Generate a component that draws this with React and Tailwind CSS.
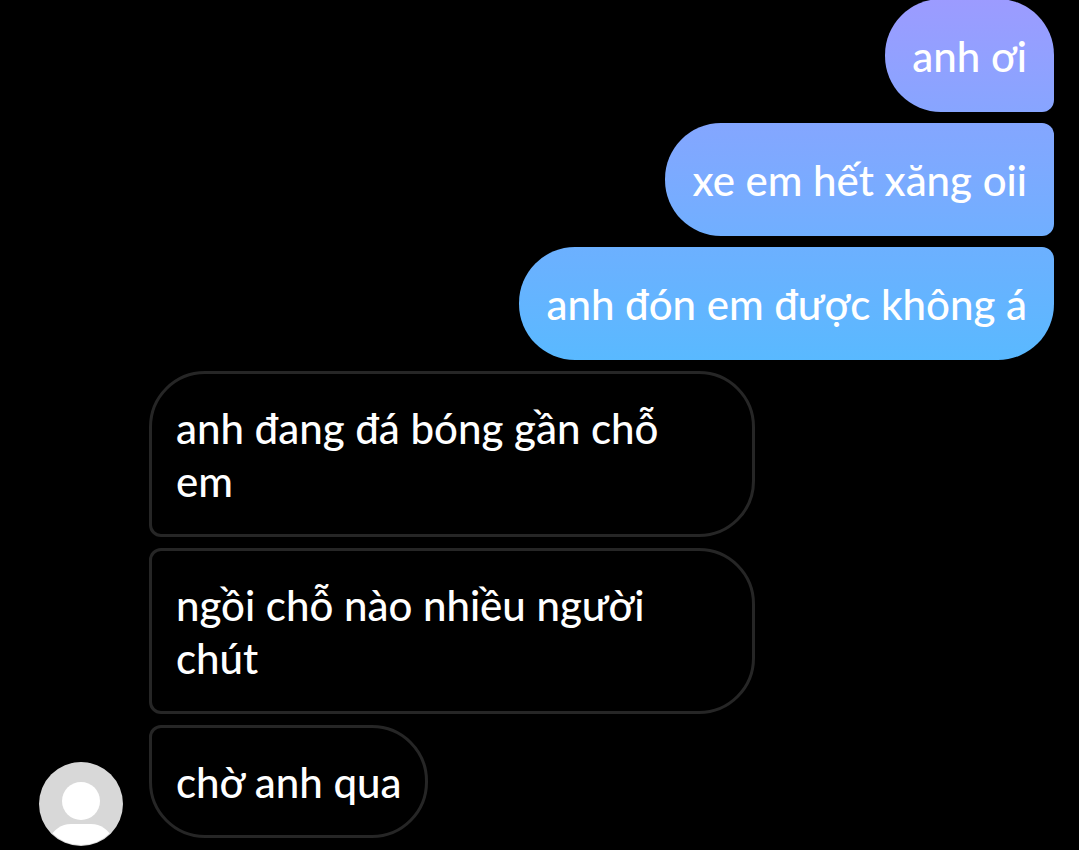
const sent = [
  {
    text: "anh ơi",
    className: "rounded-tr-[56px] rounded-br-xl from-[#9c9bff] to-[#87a5ff]",
  },
  {
    text: "xe em hết xăng oii",
    className: "rounded-r-xl from-[#84a6ff] to-[#70afff]",
  },
  {
    text: "anh đón em được không á",
    className: "rounded-tr-xl rounded-br-[56px] from-[#6cb0ff] to-[#59b9ff]",
  },
];

const received = [
  {
    text: "anh đang đá bóng gần chỗ\nem",
    className: "w-full rounded-tl-[56px] rounded-bl-xl",
  },
  { text: "ngồi chỗ nào nhiều người\nchút", className: "w-full rounded-l-xl" },
  { text: "chờ anh qua", className: "rounded-tl-xl rounded-bl-[56px]" },
];

function Avatar() {
  return (
    <svg viewBox="0 0 84 84" className="-mb-2 size-[84px] shrink-0" role="img" aria-label="Avatar">
      <defs>
        <clipPath id="avatar-clip">
          <circle cx="42" cy="42" r="41" />
        </clipPath>
      </defs>
      <circle cx="42" cy="42" r="42" fill="#d8d8d8" />
      <circle cx="42" cy="39" r="19" fill="#fff" />
      <path
        d="M10 76c5-8 12-14 22-14h20c10 0 17 6 22 14v8H10z"
        fill="#fff"
        clipPath="url(#avatar-clip)"
      />
    </svg>
  );
}

export default function App() {
  return (
    <main className="min-h-screen overflow-hidden bg-black font-['Lato','Noto_Sans',sans-serif] text-[42px] leading-[53px] font-medium text-white">
      <div className="-mt-px flex flex-col gap-[11px]">
        <ul className="flex flex-col items-end gap-[11px] pr-[25px]">
          {sent.map((message) => (
            <li
              key={message.text}
              className={`max-w-[606px] rounded-l-[56px] bg-linear-to-b px-[27px] pt-[31px] pb-[29px] ${message.className}`}
            >
              {message.text}
            </li>
          ))}
        </ul>
        <div className="flex items-end gap-[26px] pl-[39px]">
          <Avatar />
          <ul className="flex max-w-[606px] grow flex-col items-start gap-[11px]">
            {received.map((message) => (
              <li
                key={message.text}
                className={`rounded-r-[56px] border-3 border-[#262626] px-6 pt-7 pb-[26px] whitespace-pre-line ${message.className}`}
              >
                {message.text}
              </li>
            ))}
          </ul>
        </div>
      </div>
    </main>
  );
}
